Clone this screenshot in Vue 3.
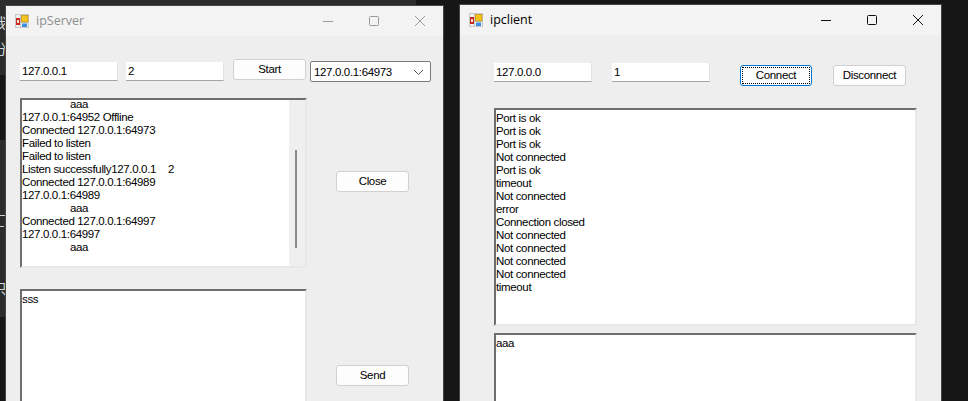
<script setup>
const serverLog = [
  { text: 'aaa', indent: true },
  { text: '127.0.0.1:64952 Offline' },
  { text: 'Connected 127.0.0.1:64973' },
  { text: 'Failed to listen' },
  { text: 'Failed to listen' },
  { text: 'Listen successfully127.0.0.1', extra: '2' },
  { text: 'Connected 127.0.0.1:64989' },
  { text: '127.0.0.1:64989' },
  { text: 'aaa', indent: true },
  { text: 'Connected 127.0.0.1:64997' },
  { text: '127.0.0.1:64997' },
  { text: 'aaa', indent: true },
]
const clientLog = [
  'Port is ok', 'Port is ok', 'Port is ok', 'Not connected', 'Port is ok', 'timeout',
  'Not connected', 'error', 'Connection closed', 'Not connected', 'Not connected',
  'Not connected', 'Not connected', 'timeout',
]
</script>

<template>
  <div class="desktop">
    <div class="patch patch-top"></div>
    <div class="patch patch-side"></div>
    <span class="frag frag-a" lang="zh">我</span>
    <span class="frag frag-b" lang="zh">分</span>
    <span class="frag frag-c" lang="zh">只</span>
    <div class="tick tick-a"></div>
    <div class="tick tick-b"></div>

    <section class="win win-server">
      <header class="title inactive">
        <svg class="app-icon" width="14" height="14" viewBox="0 0 14 14">
          <rect x="0" y="0" width="14" height="14" fill="#c9c9c9" />
          <rect x="1" y="1" width="4" height="3" fill="#efefef" />
          <rect x="1" y="11" width="4" height="2" fill="#efefef" />
          <rect x="6" y="9" width="7" height="4" fill="#efefef" />
          <rect x="1" y="4" width="4" height="7" fill="#c8281e" />
          <rect x="2" y="6" width="2" height="3" fill="#f5e3d0" />
          <rect x="6.3" y="1.3" width="6.7" height="6.7" fill="#f6c31c" stroke="#b98a10" stroke-width=".6" />
          <rect x="7" y="9.5" width="5" height="3.5" fill="#3f8fe8" />
        </svg>
        <span class="title-text">ipServer</span>
        <div class="caps">
          <svg width="12" height="12" viewBox="0 0 12 12"><path d="M1 6.5h10" /></svg>
          <svg width="12" height="12" viewBox="0 0 12 12"><rect x="1.5" y="1.5" width="9" height="9" rx="1" /></svg>
          <svg width="12" height="12" viewBox="0 0 12 12"><path d="M1 1l10 10M11 1L1 11" /></svg>
        </div>
      </header>
      <div class="body server-body">
        <div class="controls">
          <div class="tb tb-s1">127.0.0.1</div>
          <div class="tb tb-s2">2</div>
          <button class="btn btn-start">Start</button>
          <div class="combo">
            <span>127.0.0.1:64973</span>
            <svg width="11" height="7" viewBox="0 0 11 7"><path d="M1 1l4.5 4.5L10 1" /></svg>
          </div>
        </div>
        <div class="pane-row log-row">
          <div class="box log-box">
            <div class="log-lines">
              <div v-for="(line, i) in serverLog" :key="i" :class="{ indent: line.indent }">{{ line.text }}<span v-if="line.extra" class="extra">{{ line.extra }}</span></div>
            </div>
            <div class="scroll"><div class="thumb"></div></div>
          </div>
          <button class="btn btn-close">Close</button>
        </div>
        <div class="pane-row send-row">
          <div class="box send-box">sss</div>
          <button class="btn btn-send">Send</button>
        </div>
      </div>
    </section>

    <section class="win win-client">
      <header class="title">
        <svg class="app-icon" width="14" height="14" viewBox="0 0 14 14">
          <rect x="0" y="0" width="14" height="14" fill="#c9c9c9" />
          <rect x="1" y="1" width="4" height="3" fill="#efefef" />
          <rect x="1" y="11" width="4" height="2" fill="#efefef" />
          <rect x="6" y="9" width="7" height="4" fill="#efefef" />
          <rect x="1" y="4" width="4" height="7" fill="#c8281e" />
          <rect x="2" y="6" width="2" height="3" fill="#f5e3d0" />
          <rect x="6.3" y="1.3" width="6.7" height="6.7" fill="#f6c31c" stroke="#b98a10" stroke-width=".6" />
          <rect x="7" y="9.5" width="5" height="3.5" fill="#3f8fe8" />
        </svg>
        <span class="title-text">ipclient</span>
        <div class="caps">
          <svg width="12" height="12" viewBox="0 0 12 12"><path d="M1 6.5h10" /></svg>
          <svg width="12" height="12" viewBox="0 0 12 12"><rect x="1.5" y="1.5" width="9" height="9" rx="1" /></svg>
          <svg width="12" height="12" viewBox="0 0 12 12"><path d="M1 1l10 10M11 1L1 11" /></svg>
        </div>
      </header>
      <div class="body client-body">
        <div class="controls">
          <div class="tb tb-c1">127.0.0.0</div>
          <div class="tb tb-c2">1</div>
          <button class="btn btn-connect"><span>Connect</span></button>
          <button class="btn btn-disconnect">Disconnect</button>
        </div>
        <div class="box client-log">
          <div v-for="(line, i) in clientLog" :key="i">{{ line }}</div>
        </div>
        <div class="box client-send">aaa</div>
      </div>
    </section>
  </div>
</template>

<style>
html, body { margin: 0; background: #161616; }
</style>

<style scoped>
.desktop {
  position: relative;
  width: 968px;
  height: 401px;
  overflow: hidden;
  background: #161616;
  font: 11.5px/13px "Liberation Sans", Arial, sans-serif;
  letter-spacing: -0.35px;
  color: #000;
}
.patch { position: absolute; background: #2c2c2c; }
.patch-top { left: 0; top: 0; width: 416px; height: 75px; }
.patch-side { left: 0; top: 140px; width: 6px; height: 177px; }
.frag {
  position: absolute;
  left: -7px;
  color: #d8d8d8;
  letter-spacing: 0;
  font: 14px/16px "Noto Sans CJK SC", sans-serif;
}
.frag-a { top: 14px; }
.frag-b { top: 40px; }
.frag-c { top: 280px; }
.tick { position: absolute; left: 0; width: 6px; height: 1px; background: #cfcfcf; }
.tick-a { top: 215px; }
.tick-b { top: 226px; width: 4px; }

.win {
  position: absolute;
  bottom: 0;
  background: #eeeeee;
  box-shadow: 0 0 0 1px #454545;
}
.win-server { left: 6px; top: 6px; width: 437px; }
.win-client { left: 460px; top: 5px; width: 481px; }

.title {
  display: flex;
  align-items: center;
  height: 30px;
  padding-left: 9px;
  background: #f3f3f3;
  box-sizing: border-box;
}
.title-text {
  margin-left: 7px;
  font: 12.5px/16px "Open Sans", sans-serif;
  letter-spacing: 0;
  color: #000;
}
.inactive .title-text { color: #8f8f8f; }
.caps {
  margin-left: auto;
  display: flex;
  gap: 34px;
  padding-right: 17px;
}
.caps svg { fill: none; stroke: #111; stroke-width: 1; display: block; }
.inactive .caps svg { stroke: #9a9a9a; }

.controls { display: flex; align-items: flex-start; }

.tb {
  box-sizing: border-box;
  width: 98px;
  height: 19px;
  padding: 3px 2px 0;
  background: #fff;
  border-bottom: 1px solid #a5a5a5;
  border-right: 1px solid #e4e4e4;
}
.btn {
  display: block;
  box-sizing: border-box;
  width: 73px;
  height: 21px;
  padding: 0;
  font: inherit;
  letter-spacing: inherit;
  color: #000;
  background: #fdfdfd;
  border: 1px solid #d0d0d0;
  border-radius: 3px;
}

.server-body { padding: 23px 0 0 14px; }
.tb-s1 { margin-top: 3px; }
.tb-s2 { margin: 3px 0 0 8px; }
.btn-start { margin-left: 9px; }
.combo {
  box-sizing: border-box;
  display: flex;
  align-items: center;
  justify-content: space-between;
  width: 121px;
  height: 21px;
  margin: 2px 0 0 4px;
  padding: 1px 6px 0 3px;
  background: #fff;
  border: 1px solid #7a7a7a;
  border-radius: 2px;
}
.combo svg { fill: none; stroke: #555; stroke-width: 1; }

.pane-row { display: flex; align-items: flex-start; }
.box {
  box-sizing: border-box;
  background: #fff;
  border-style: solid;
  border-width: 2px;
  border-color: #6e6e6e #e8e8e8 #e8e8e8 #6e6e6e;
}
.log-row { margin-top: 16px; }
.log-box {
  display: flex;
  width: 287px;
  height: 170px;
}
.log-lines { flex: 1; margin-top: -2px; overflow: hidden; }
.indent { padding-left: 48px; }
.extra { margin-left: 12px; }
.scroll { position: relative; width: 16px; background: #efefef; }
.thumb {
  position: absolute;
  left: 6px;
  top: 50px;
  width: 2px;
  height: 98px;
  background: #8a8a8a;
}
.btn-close { margin: 73px 0 0 29px; }
.send-row { margin-top: 21px; }
.send-box {
  width: 287px;
  height: 140px;
  padding: 2px 0 0;
}
.btn-send { margin: 76px 0 0 29px; }

.client-body { padding: 28px 0 0 34px; }
.tb-c1 { padding-top: 3px; }
.tb-c2 { margin-left: 20px; padding-top: 3px; }
.btn-connect {
  margin: 2px 0 0 30px;
  width: 72px;
  border-color: #0078d4;
  padding: 1px;
}
.btn-connect span {
  display: flex;
  align-items: center;
  justify-content: center;
  box-sizing: border-box;
  height: 100%;
  outline: 1px dotted #000;
  outline-offset: -1px;
}
.btn-disconnect { margin: 2px 0 0 21px; }
.client-log {
  width: 423px;
  height: 218px;
  margin-top: 22px;
  padding: 2px 0 0;
}
.client-send {
  width: 423px;
  height: 120px;
  margin-top: 7px;
  padding: 2px 0 0;
}
</style>
